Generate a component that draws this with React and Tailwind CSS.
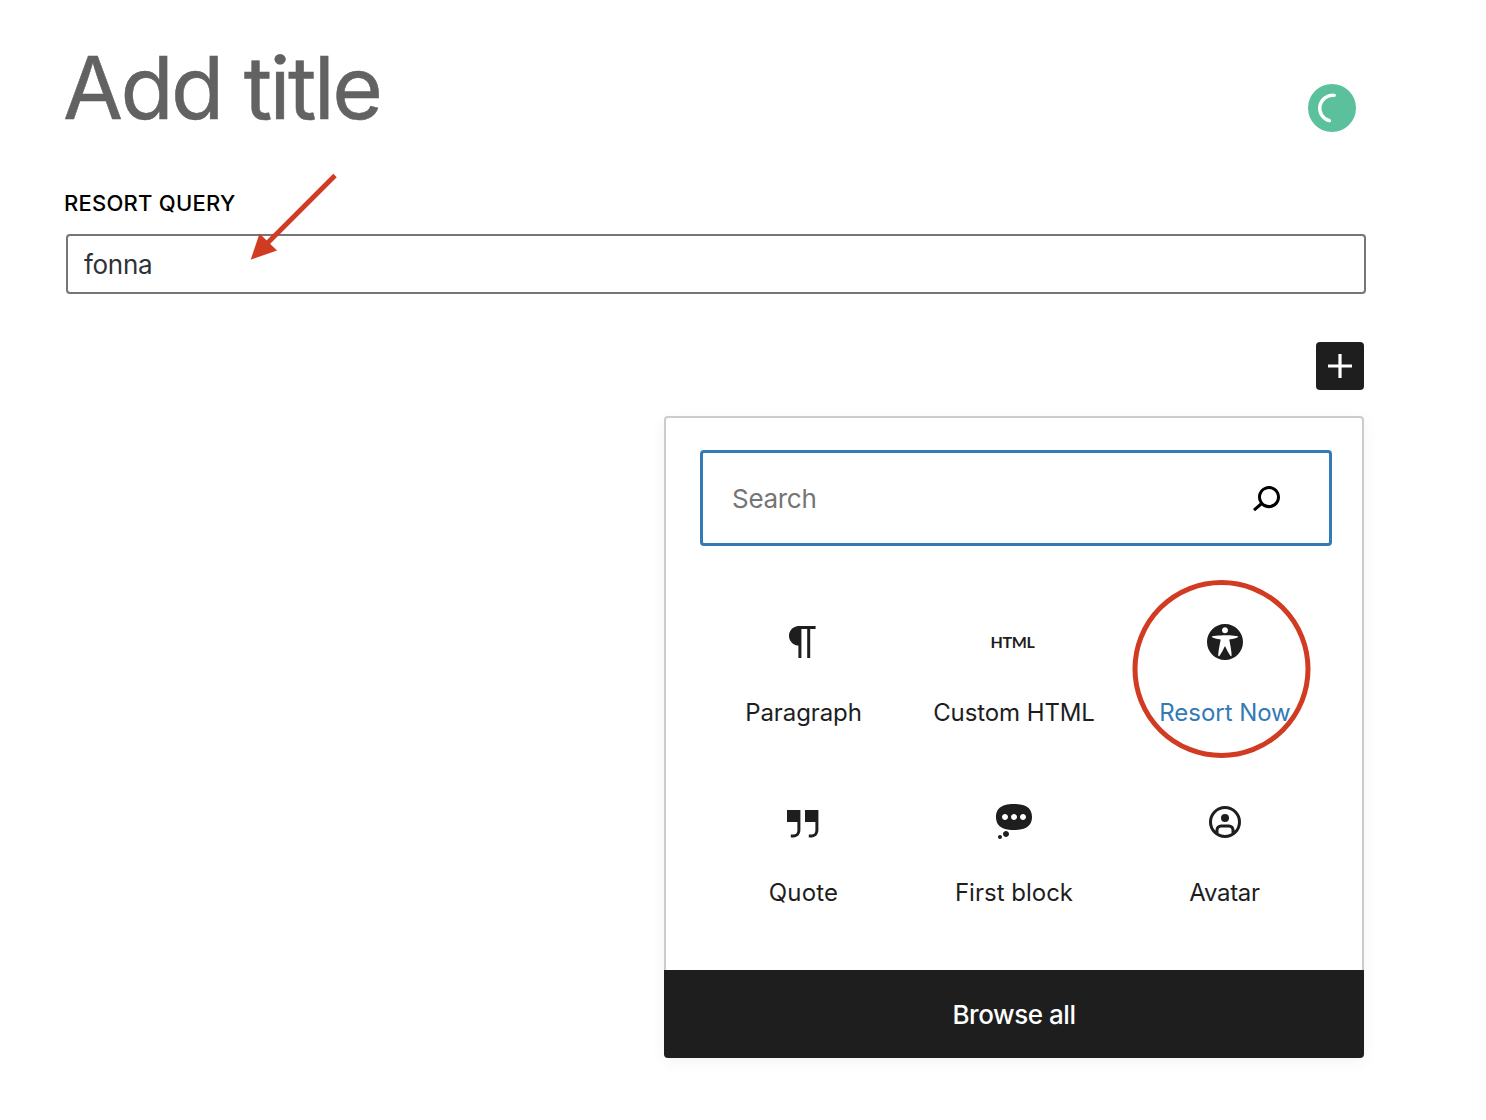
const PATHS = {
  plus: 'M18 11.2h-5.2V6h-1.6v5.2H6v1.6h5.2V18h1.6v-5.2H18z',
  search:
    'M13.5 6C10.5 6 8 8.5 8 11.5c0 1.1.3 2.1.9 3l-3.4 3 1 1.1 3.4-2.9c1 .9 2.2 1.4 3.6 1.4 3 0 5.5-2.5 5.5-5.5C19 8.5 16.5 6 13.5 6zm0 9.5c-2.2 0-4-1.8-4-4s1.8-4 4-4 4 1.8 4 4-1.8 4-4 4z',
  paragraph: 'M18.3 4H9.9v-.1l-.9.2c-2.3.4-4 2.4-4 4.8s1.7 4.4 4 4.8l.7.1V20h1.5V5.5h2.9V20h1.5V5.5h2.7V4z',
  quote:
    'M13 6v6h5.2v4c0 .8-.2 1.4-.5 1.7-.6.6-1.6.6-2.5.5h-.3v1.5h.5c1 0 2.3-.1 3.3-1 .6-.6 1-1.6 1-2.8V6H13zm-9 6h5.2v4c0 .8-.2 1.4-.5 1.7-.6.6-1.6.6-2.5.5h-.3v1.5h.5c1 0 2.3-.1 3.3-1 .6-.6 1-1.6 1-2.8V6H4v6z',
  avatar:
    'M7.25 16.437a6.5 6.5 0 1 1 9.5 0V16A2.75 2.75 0 0 0 14 13.25h-4A2.75 2.75 0 0 0 7.25 16v.437Zm1.5 1.193a6.47 6.47 0 0 0 3.25.87 6.47 6.47 0 0 0 3.25-.87V16c0-.69-.56-1.25-1.25-1.25h-4c-.69 0-1.25.56-1.25 1.25v1.63ZM4 12a8 8 0 1 1 16 0 8 8 0 0 1-16 0Zm10-2a2 2 0 1 1-4 0 2 2 0 0 1 4 0Z',
  access:
    'M19 10c0-4.97-4.03-9-9-9s-9 4.03-9 9 4.03 9 9 9 9-4.03 9-9zm-9-7.4c.83 0 1.5.67 1.5 1.5s-.67 1.51-1.5 1.51c-.82 0-1.5-.68-1.5-1.51s.68-1.5 1.5-1.5zM3.4 7.36c0-.65 6.6-.76 6.6-.76s6.6.11 6.6.76-4.47 1.4-4.47 1.4 1.69 8.14 1.06 8.38c-.62.24-3.19-5.19-3.19-5.19s-2.56 5.43-3.18 5.19c-.63-.24 1.06-8.38 1.06-8.38S3.4 8.01 3.4 7.36z',
  bubble:
    'M10 1c7 0 9 2.91 9 6.5S17 14 10 14s-9-2.91-9-6.5S3 1 10 1zM5.5 9C6.33 9 7 8.33 7 7.5S6.33 6 5.5 6 4 6.67 4 7.5 4.67 9 5.5 9zM10 9c.83 0 1.5-.67 1.5-1.5S10.83 6 10 6s-1.5.67-1.5 1.5S9.17 9 10 9zm4.5 0c.83 0 1.5-.67 1.5-1.5S15.33 6 14.5 6 13 6.67 13 7.5 13.67 9 14.5 9zM6 14.5c.83 0 1.5.67 1.5 1.5s-.67 1.5-1.5 1.5-1.5-.67-1.5-1.5.67-1.5 1.5-1.5zm-3 2c.55 0 1 .45 1 1s-.45 1-1 1-1-.45-1-1 .45-1 1-1z',
};

function Icon({ name }) {
  return (
    <svg viewBox="0 0 24 24" className="size-12 shrink-0" fill="currentColor" fillRule="evenodd" aria-hidden="true">
      <path d={PATHS[name]} />
    </svg>
  );
}

function DashIcon({ name }) {
  return (
    <svg viewBox="0 0 20 20" className="size-10 shrink-0" fill="currentColor" fillRule="evenodd" aria-hidden="true">
      <path d={PATHS[name]} />
    </svg>
  );
}

const BLOCKS = [
  { label: 'Paragraph', icon: <Icon name="paragraph" />, text: 'text-[#1e1e1e] tracking-[-0.1px] pl-0.5' },
  {
    label: 'Custom HTML',
    icon: <span className="mr-0.5 font-['Lato'] text-[16px] leading-none font-bold tracking-[-0.3px]">HTML</span>,
    text: 'text-[#1e1e1e] tracking-[-0.1px] pl-px',
  },
  { label: 'Resort Now', icon: <DashIcon name="access" />, text: 'text-[#337ab7] tracking-[-0.05px] pl-px' },
  { label: 'Quote', icon: <Icon name="quote" />, text: 'text-[#1e1e1e] tracking-[0.2px] pl-0.5' },
  { label: 'First block', icon: <DashIcon name="bubble" />, text: 'text-[#1e1e1e] pl-px' },
  { label: 'Avatar', icon: <Icon name="avatar" />, text: 'text-[#1e1e1e] tracking-[-0.3px]' },
];

function BlockItem({ label, icon, text }) {
  return (
    <button className="flex h-[180px] flex-col items-center pt-12 text-[#1e1e1e]">
      <span className="flex h-12 items-center justify-center">{icon}</span>
      <span className={`mt-[35px] text-2xl leading-6 whitespace-nowrap ${text}`}>{label}</span>
    </button>
  );
}

function Inserter() {
  return (
    <section className="mt-[26px] mr-0.5 w-[700px] rounded-[4px] shadow-[0_4px_16px_rgba(0,0,0,0.05)]">
      <div className="h-[554px] rounded-t-[4px] border-2 border-b-0 border-[#cccccc] bg-white px-8 pt-8">
        <div className="ml-0.5 flex h-24 w-[632px] items-center justify-between rounded-[4px] border-3 border-[#337ab7] pr-[39px] pl-[29px]">
          <span className="pt-0.5 text-[26px] leading-8 tracking-[-0.3px] text-[#757575]">Search</span>
          <span className="text-black">
            <Icon name="search" />
          </span>
        </div>
        <div className="mt-6 -ml-px grid w-[633px] grid-cols-3">
          {BLOCKS.map((block) => (
            <BlockItem key={block.label} {...block} />
          ))}
        </div>
      </div>
      <button className="flex h-[88px] w-full items-center justify-center rounded-b-[4px] bg-[#1e1e1e] pt-px text-[26px] leading-8 font-medium tracking-[-0.45px] text-white">
        Browse all
      </button>
    </section>
  );
}

function Spinner() {
  return (
    <svg viewBox="0 0 48 48" className="absolute top-[84px] left-[1308px] size-12" aria-hidden="true">
      <circle cx="24" cy="24" r="24" fill="#5bc09c" />
      <path d="M26.2 11.4A12.9 12.9 0 0 0 21.4 36.7" fill="none" stroke="#fff" strokeWidth="3.4" strokeLinecap="round" />
    </svg>
  );
}

function Annotations() {
  return (
    <>
      <svg viewBox="0 0 100 100" className="absolute top-[168px] left-[244px] size-[100px]" aria-hidden="true">
        <path d="M91 7.5L22 76.5" stroke="#d13b22" strokeWidth="5" />
        <path d="M6.7 91.7L15.5 65.5 33 82.5z" fill="#d13b22" />
      </svg>
      <svg viewBox="0 0 180 180" className="absolute top-[579px] left-[1131px] size-[180px]" fill="none" aria-hidden="true">
        <circle cx="90.5" cy="90" r="86.5" stroke="#d13b22" strokeWidth="5" />
      </svg>
    </>
  );
}

export default function App() {
  return (
    <main className="relative h-[1120px] w-[1486px] overflow-hidden bg-white pt-7 pr-[120px] pl-16 font-['Inter',sans-serif]">
      <h1 className="-mt-px -ml-px h-[120px] pt-px text-[87px] leading-[120px] font-normal tracking-[-2.6px] whitespace-nowrap text-[#626262] [-webkit-text-stroke:0.5px_#626262]">
        Add title
      </h1>
      <label className="mt-10 block text-[22px] leading-8 font-medium tracking-[0.25px] text-black">RESORT QUERY</label>
      <div className="mt-[15px] ml-0.5 flex h-[60px] items-center rounded-[4px] border-2 border-[#757575] px-4 pt-0.5 text-[26px] leading-8 tracking-[-0.3px] text-[#2c3338]">
        fonna
      </div>
      <div className="flex flex-col items-end">
        <button className="mt-12 mr-0.5 flex size-12 items-center justify-center rounded-[4px] bg-[#1e1e1e] text-white" aria-label="Add block">
          <Icon name="plus" />
        </button>
        <Inserter />
      </div>
      <Spinner />
      <Annotations />
    </main>
  );
}
